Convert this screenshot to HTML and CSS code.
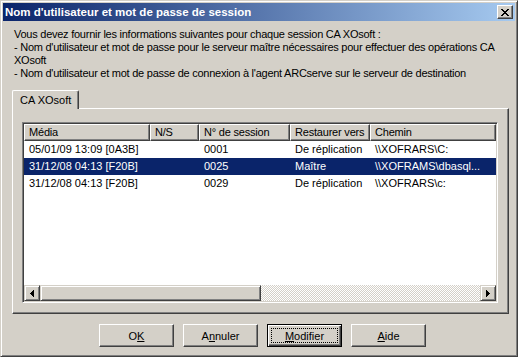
FILE: index.html
```html
<!DOCTYPE html>
<html lang="fr">
<head>
  <meta charset="UTF-8">
  <title>Nom d'utilisateur et mot de passe de session</title>
  <link rel="stylesheet" href="styles.css">
</head>
<body>

  <div class="window">
    <div class="titlebar">
      <span class="title">Nom d'utilisateur et mot de passe de session</span>
      <div class="close-btn">
        <svg width="8" height="7" viewBox="0 0 8 7">
          <rect x="0" y="0" width="2" height="1"/><rect x="6" y="0" width="2" height="1"/>
          <rect x="1" y="1" width="2" height="1"/><rect x="5" y="1" width="2" height="1"/>
          <rect x="2" y="2" width="4" height="1"/>
          <rect x="3" y="3" width="2" height="1"/>
          <rect x="2" y="4" width="4" height="1"/>
          <rect x="1" y="5" width="2" height="1"/><rect x="5" y="5" width="2" height="1"/>
          <rect x="0" y="6" width="2" height="1"/><rect x="6" y="6" width="2" height="1"/>
        </svg>
      </div>
    </div>

    <div class="content">
      <p class="intro">
        Vous devez fournir les informations suivantes pour chaque session CA XOsoft :<br>
        - Nom d'utilisateur et mot de passe pour le serveur maître nécessaires pour effectuer des opérations CA<br>
        XOsoft<br>
        - Nom d'utilisateur et mot de passe de connexion à l'agent ARCserve sur le serveur de destination
      </p>

      <div class="tabs">
        <div class="tab active">CA XOsoft</div>
      </div>

      <div class="tab-panel">
        <div class="listview">
          <div class="list-header">
            <div class="col col-media">Média</div>
            <div class="col col-ns">N/S</div>
            <div class="col col-session">N° de session</div>
            <div class="col col-restore">Restaurer vers</div>
            <div class="col col-path">Chemin</div>
          </div>
          <div class="list-body">
            <div class="list-row">
              <div class="cell col-media">05/01/09 13:09 [0A3B]</div>
              <div class="cell col-ns"></div>
              <div class="cell col-session">0001</div>
              <div class="cell col-restore">De réplication</div>
              <div class="cell col-path">\\XOFRARS\C:</div>
            </div>
            <div class="list-row selected">
              <div class="cell col-media">31/12/08 04:13 [F20B]</div>
              <div class="cell col-ns"></div>
              <div class="cell col-session">0025</div>
              <div class="cell col-restore">Maître</div>
              <div class="cell col-path">\\XOFRAMS\dbasql...</div>
            </div>
            <div class="list-row">
              <div class="cell col-media">31/12/08 04:13 [F20B]</div>
              <div class="cell col-ns"></div>
              <div class="cell col-session">0029</div>
              <div class="cell col-restore">De réplication</div>
              <div class="cell col-path">\\XOFRARS\c:</div>
            </div>
          </div>
          <div class="hscroll">
            <div class="scroll-btn">
              <svg width="4" height="7" viewBox="0 0 4 7">
                <rect x="0" y="3" width="1" height="1"/><rect x="1" y="2" width="1" height="3"/>
                <rect x="2" y="1" width="1" height="5"/><rect x="3" y="0" width="1" height="7"/>
              </svg>
            </div>
            <div class="scroll-thumb"></div>
            <div class="scroll-track"></div>
            <div class="scroll-btn">
              <svg width="4" height="7" viewBox="0 0 4 7">
                <rect x="0" y="0" width="1" height="7"/><rect x="1" y="1" width="1" height="5"/>
                <rect x="2" y="2" width="1" height="3"/><rect x="3" y="3" width="1" height="1"/>
              </svg>
            </div>
          </div>
        </div>
      </div>

      <div class="button-row">
        <div class="button">O<u>K</u></div>
        <div class="button">A<u>n</u>nuler</div>
        <div class="button default"><span class="focus"><u>M</u>odifier</span></div>
        <div class="button"><u>A</u>ide</div>
      </div>
    </div>
  </div>

</body>
</html>
```

FILE: styles.css
```css
:root {
  --face: #d4d0c8;
  --shadow: #808080;
  --dark: #404040;
  --highlight: #fff;
  --select: #0a246a;
  --ui-font: "Liberation Sans", Arial, sans-serif;
}

* {
  box-sizing: border-box;
}

body {
  margin: 0;
  background: var(--face);
  font-family: var(--ui-font);
  font-size: 11px;
  color: #000;
}

.window {
  width: 518px;
  height: 357px;
  padding: 2px;
  border: 1px solid;
  border-color: var(--face) var(--dark) var(--dark) var(--face);
  box-shadow: inset 1px 1px var(--highlight), inset -1px -1px var(--shadow);
  background: var(--face);
  display: flex;
  flex-direction: column;
  overflow: hidden;
}

/* title bar */
.titlebar {
  flex: none;
  height: 18px;
  display: flex;
  align-items: center;
  justify-content: space-between;
  padding-left: 2px;
  background: linear-gradient(to right, #0a246a, #a6caf0);
}

.title {
  color: #fff;
  font-weight: bold;
  font-size: 11.5px;
}

.close-btn {
  width: 16px;
  height: 14px;
  margin-right: 2px;
  display: flex;
  align-items: center;
  justify-content: center;
  background: var(--face);
  border: 1px solid;
  border-color: var(--highlight) var(--dark) var(--dark) var(--highlight);
  box-shadow: inset -1px -1px var(--shadow);
}

.close-btn svg {
  display: block;
}

/* body */
.content {
  flex: 1;
  padding: 0 0 0 9px;
}

.intro {
  margin: 7px 0 0 2px;
  font-size: 11px;
  letter-spacing: -0.25px;
  line-height: 13px;
  white-space: nowrap;
}

.tabs {
  display: flex;
  margin-top: 10px;
}

.tab {
  position: relative;
  z-index: 1;
  height: 19px;
  margin-bottom: -1px;
  padding: 3px 7px 0 7px;
  background: var(--face);
  border-top: 1px solid var(--highlight);
  border-left: 1px solid var(--highlight);
  border-right: 1px solid var(--dark);
  border-radius: 2px 2px 0 0;
  box-shadow: inset -1px 0 var(--shadow);
}

.tab-panel {
  width: 497px;
  height: 206px;
  padding: 13px 0 0 9px;
  border: 1px solid;
  border-color: var(--highlight) var(--dark) var(--dark) var(--highlight);
  box-shadow: inset -1px -1px var(--shadow);
}

/* list view */
.listview {
  width: 476px;
  height: 181px;
  padding: 1px;
  display: flex;
  flex-direction: column;
  background: #fff;
  border: 1px solid;
  border-color: var(--shadow) var(--highlight) var(--highlight) var(--shadow);
  box-shadow: inset 1px 1px var(--dark), inset -1px -1px var(--face);
}

.list-header,
.list-row {
  display: flex;
}

.list-header .col {
  height: 17px;
  line-height: 15px;
  padding-left: 4px;
  background: var(--face);
  border-top: 1px solid var(--highlight);
  border-left: 1px solid var(--highlight);
  border-right: 1px solid var(--dark);
  border-bottom: 1px solid var(--dark);
  box-shadow: inset -1px -1px var(--shadow);
  white-space: nowrap;
  overflow: hidden;
  letter-spacing: -0.2px;
}

.col-media { width: 126px; }
.col-ns { width: 49px; }
.col-session { width: 91px; }
.col-restore { width: 80px; }
.col-path { width: 126px; }

.list-body {
  flex: 1;
}

.list-row {
  height: 17px;
  line-height: 17px;
}

.list-row .cell {
  padding-left: 5px;
  white-space: nowrap;
  overflow: hidden;
}

.list-row.selected {
  background: var(--select);
  color: #fff;
}

/* horizontal scrollbar */
.hscroll {
  height: 16px;
  display: flex;
}

.scroll-btn,
.scroll-thumb {
  background: var(--face);
  border: 1px solid;
  border-color: var(--face) var(--dark) var(--dark) var(--face);
  box-shadow: inset 1px 1px var(--highlight), inset -1px -1px var(--shadow);
}

.scroll-btn {
  width: 16px;
  display: flex;
  align-items: center;
  justify-content: center;
}

.scroll-btn svg {
  display: block;
}

.scroll-thumb {
  width: 221px;
}

.scroll-track {
  flex: 1;
  background: repeating-conic-gradient(var(--face) 0% 25%, #fff 0% 50%) 0 0 / 2px 2px;
}

/* buttons */
.button-row {
  display: flex;
  gap: 9px;
  margin: 10px 0 0 87px;
}

.button {
  width: 75px;
  height: 23px;
  display: flex;
  align-items: center;
  justify-content: center;
  background: var(--face);
  border: 1px solid;
  border-color: var(--highlight) var(--dark) var(--dark) var(--highlight);
  box-shadow: inset -1px -1px var(--shadow);
}

.button.default {
  border: 1px solid #000;
  box-shadow: inset 1px 1px var(--highlight), inset -1px -1px var(--dark), inset -2px -2px var(--shadow);
  padding: 3px;
  align-items: stretch;
}

.focus {
  flex: 1;
  display: flex;
  align-items: center;
  justify-content: center;
  border: 1px dotted #000;
}
```
